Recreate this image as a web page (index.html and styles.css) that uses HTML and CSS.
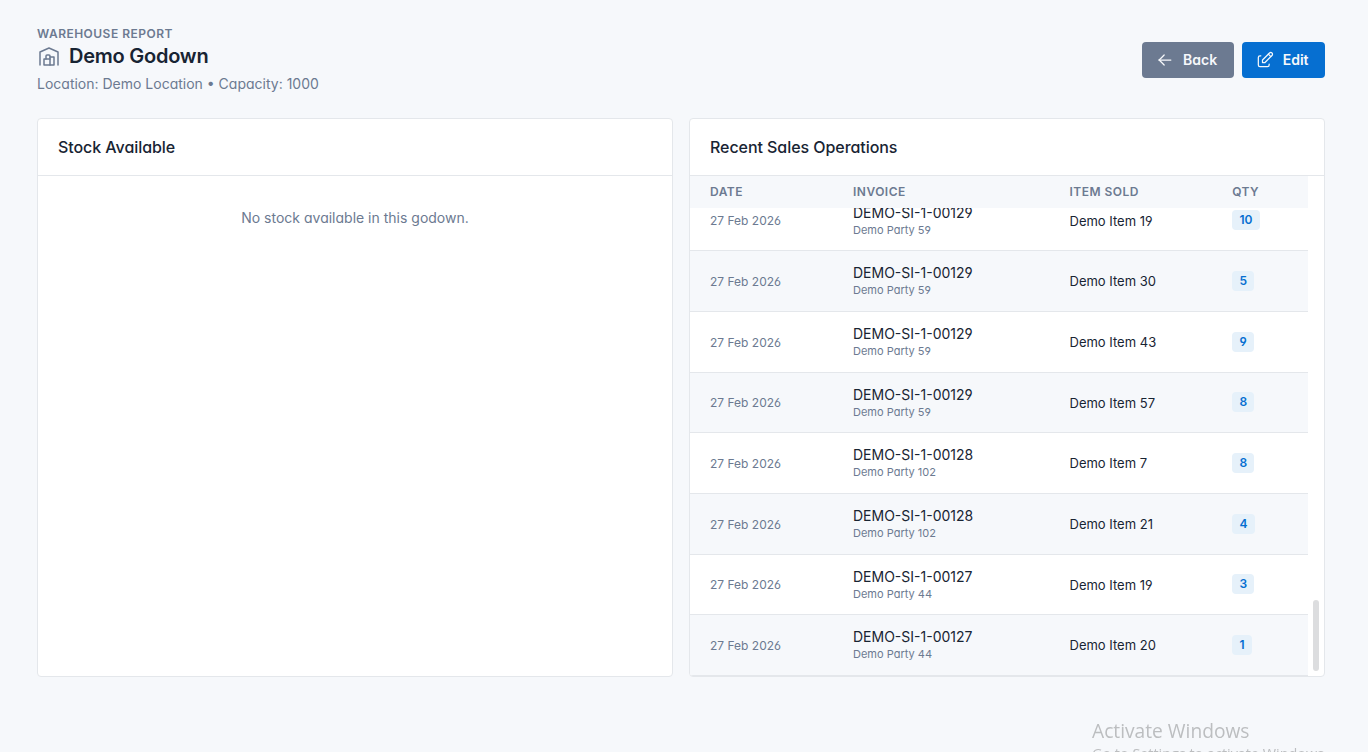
FILE: index.html
```html
<!DOCTYPE html>
<html lang="en">

<head>
    <meta charset="utf-8">
    <title>Demo Godown</title>
    <link rel="stylesheet" href="styles.css">
</head>

<body>
    <div class="page">
        <header class="page-header">
            <div class="page-heading">
                <div class="page-pretitle">Warehouse Report</div>
                <h2 class="page-title">
                    <svg class="icon title-icon" viewBox="0 0 24 24" aria-hidden="true">
                        <path d="M3 21v-13l9 -4l9 4v13" />
                        <path d="M13 13h4v8h-10v-6h6" />
                        <path d="M13 21v-9a1 1 0 0 0 -1 -1h-2a1 1 0 0 0 -1 1v3" />
                    </svg>
                    Demo Godown
                </h2>
                <div class="page-subtitle">Location: Demo Location • Capacity: 1000</div>
            </div>
            <div class="btn-list">
                <a href="#" class="btn btn-secondary">
                    <svg class="icon" viewBox="0 0 24 24" aria-hidden="true">
                        <path d="M5 12h14" />
                        <path d="M5 12l6 6" />
                        <path d="M5 12l6 -6" />
                    </svg>
                    Back
                </a>
                <a href="#" class="btn btn-primary">
                    <svg class="icon" viewBox="0 0 24 24" aria-hidden="true">
                        <path d="M7 7h-1a2 2 0 0 0 -2 2v9a2 2 0 0 0 2 2h9a2 2 0 0 0 2 -2v-1" />
                        <path d="M20.385 6.585a2.1 2.1 0 0 0 -2.97 -2.97l-8.415 8.385v3h3l8.385 -8.415z" />
                        <path d="M16 5l3 3" />
                    </svg>
                    Edit
                </a>
            </div>
        </header>

        <main class="cards">
            <section class="card">
                <h3 class="card-header">Stock Available</h3>
                <div class="card-body empty">No stock available in this godown.</div>
            </section>

            <section class="card">
                <h3 class="card-header">Recent Sales Operations</h3>
                <div class="card-body scroll-area">
                    <div class="table">
                        <div class="row table-head">
                            <div>Date</div>
                            <div>Invoice</div>
                            <div>Item Sold</div>
                            <div>Qty</div>
                        </div>
                        <div class="table-rows">
                            <div class="row">
                                <div class="date">27 Feb 2026</div>
                                <div class="invoice">DEMO-SI-1-00129<div class="party">Demo Party 59</div></div>
                                <div class="item">Demo Item 19</div>
                                <div><span class="badge">10</span></div>
                            </div>
                            <div class="row">
                                <div class="date">27 Feb 2026</div>
                                <div class="invoice">DEMO-SI-1-00129<div class="party">Demo Party 59</div></div>
                                <div class="item">Demo Item 30</div>
                                <div><span class="badge">5</span></div>
                            </div>
                            <div class="row">
                                <div class="date">27 Feb 2026</div>
                                <div class="invoice">DEMO-SI-1-00129<div class="party">Demo Party 59</div></div>
                                <div class="item">Demo Item 43</div>
                                <div><span class="badge">9</span></div>
                            </div>
                            <div class="row">
                                <div class="date">27 Feb 2026</div>
                                <div class="invoice">DEMO-SI-1-00129<div class="party">Demo Party 59</div></div>
                                <div class="item">Demo Item 57</div>
                                <div><span class="badge">8</span></div>
                            </div>
                            <div class="row">
                                <div class="date">27 Feb 2026</div>
                                <div class="invoice">DEMO-SI-1-00128<div class="party">Demo Party 102</div></div>
                                <div class="item">Demo Item 7</div>
                                <div><span class="badge">8</span></div>
                            </div>
                            <div class="row">
                                <div class="date">27 Feb 2026</div>
                                <div class="invoice">DEMO-SI-1-00128<div class="party">Demo Party 102</div></div>
                                <div class="item">Demo Item 21</div>
                                <div><span class="badge">4</span></div>
                            </div>
                            <div class="row">
                                <div class="date">27 Feb 2026</div>
                                <div class="invoice">DEMO-SI-1-00127<div class="party">Demo Party 44</div></div>
                                <div class="item">Demo Item 19</div>
                                <div><span class="badge">3</span></div>
                            </div>
                            <div class="row">
                                <div class="date">27 Feb 2026</div>
                                <div class="invoice">DEMO-SI-1-00127<div class="party">Demo Party 44</div></div>
                                <div class="item">Demo Item 20</div>
                                <div><span class="badge">1</span></div>
                            </div>
                        </div>
                    </div>
                    <div class="scrollbar">
                        <div class="scrollbar-thumb"></div>
                    </div>
                </div>
            </section>
        </main>
    </div>

    <div class="watermark">
        <div class="watermark-title">Activate Windows</div>
        <div class="watermark-text">Go to Settings to activate Windows.</div>
    </div>
</body>

</html>
```
FILE: styles.css
```css
* {
    box-sizing: border-box;
}

body {
    margin: 0;
    height: 100vh;
    overflow: hidden;
    font-family: Inter, sans-serif;
    font-feature-settings: "cv03", "cv04", "cv11";
    font-size: 14px;
    line-height: 20px;
    color: #182433;
    background-color: #f6f8fb;
}

.page {
    padding: 26px 43px 0 37px;
}

.page-header {
    display: flex;
    justify-content: space-between;
    align-items: center;
    height: 68px;
}

.page-pretitle {
    font-size: 12px;
    font-weight: 600;
    line-height: 16px;
    letter-spacing: 0.04em;
    text-transform: uppercase;
    color: #6c7a91;
}

.page-title {
    display: flex;
    align-items: center;
    gap: 8px;
    margin: 0;
    font-size: 20px;
    font-weight: 600;
    line-height: 28px;
    letter-spacing: -0.24px;
}

.page-subtitle {
    margin-top: 4px;
    color: #6c7a91;
}

.icon {
    width: 20px;
    height: 20px;
    fill: none;
    stroke: currentColor;
    stroke-width: 1.5;
    stroke-linecap: round;
    stroke-linejoin: round;
}

.title-icon {
    width: 24px;
    height: 24px;
    color: #6c7a91;
}

.btn-list {
    display: flex;
    gap: 8px;
}

.btn {
    display: flex;
    align-items: center;
    gap: 8px;
    height: 36px;
    padding: 0 16.5px 0 13px;
    border-radius: 4px;
    font-weight: 600;
    color: #f6f8fb;
    text-decoration: none;
}

.btn-secondary {
    background-color: #6c7a91;
}

.btn-primary {
    background-color: #066fd1;
}

.cards {
    display: grid;
    grid-template-columns: 1fr 1fr;
    gap: 16px;
    margin-top: 24px;
}

.card {
    border: 1px solid #e4e7eb;
    border-radius: 4px;
    background-color: #ffffff;
    overflow: hidden;
}

.card-header {
    height: 57px;
    margin: 0;
    padding: 16px 20px;
    border-bottom: 1px solid #e4e7eb;
    font-size: 16px;
    font-weight: 500;
    line-height: 24px;
    letter-spacing: -0.06px;
}

.card-body {
    height: 500px;
}

.empty {
    padding-top: 32px;
    text-align: center;
    color: #6c7a91;
}

.scroll-area {
    display: flex;
}

.table {
    display: flex;
    flex-direction: column;
    flex: 1;
}

.row {
    display: grid;
    grid-template-columns: 143px 216.5px 162.7px 1fr;
    align-items: center;
    flex: none;
    height: 60.69px;
    padding-left: 20px;
    border-bottom: 1px solid #e4e7eb;
}

.row:nth-child(even) {
    background-color: #f6f8fb;
}

.table-head {
    height: 32px;
    border-bottom: 0;
    background-color: #f6f8fb;
    font-size: 12px;
    font-weight: 600;
    letter-spacing: 0.04em;
    text-transform: uppercase;
    color: #6c7a91;
}

/* scrolled to the last row */
.table-rows {
    display: flex;
    flex: 1;
    flex-direction: column;
    justify-content: flex-end;
    min-height: 0;
    overflow: hidden;
}

.date {
    padding-top: 2px;
    font-size: 12px;
    color: #6c7a91;
}

.invoice {
    padding-bottom: 0.6px;
}

.party {
    font-size: 11px;
    line-height: 15px;
    color: #6c7a91;
}

.item {
    padding-top: 0.4px;
    font-size: 13px;
}

.badge {
    display: block;
    width: fit-content;
    padding: 0 7.2px;
    border-radius: 4px;
    background-color: #e6f1fa;
    font-size: 12px;
    font-weight: 600;
    line-height: 20px;
    color: #066fd1;
}

.scrollbar {
    display: flex;
    justify-content: center;
    align-items: flex-end;
    width: 16px;
    padding-bottom: 5px;
}

.scrollbar-thumb {
    width: 6px;
    height: 71px;
    border-radius: 3px;
    background-color: #dcdddf;
}

.watermark {
    position: fixed;
    top: 718px;
    left: 1092px;
    font-family: "Open Sans", sans-serif;
    font-feature-settings: normal;
    white-space: nowrap;
    color: #bcbec0;
}

.watermark-title {
    font-size: 19.2px;
    line-height: 26px;
}

.watermark-text {
    font-size: 14.4px;
    line-height: 20px;
}
```
